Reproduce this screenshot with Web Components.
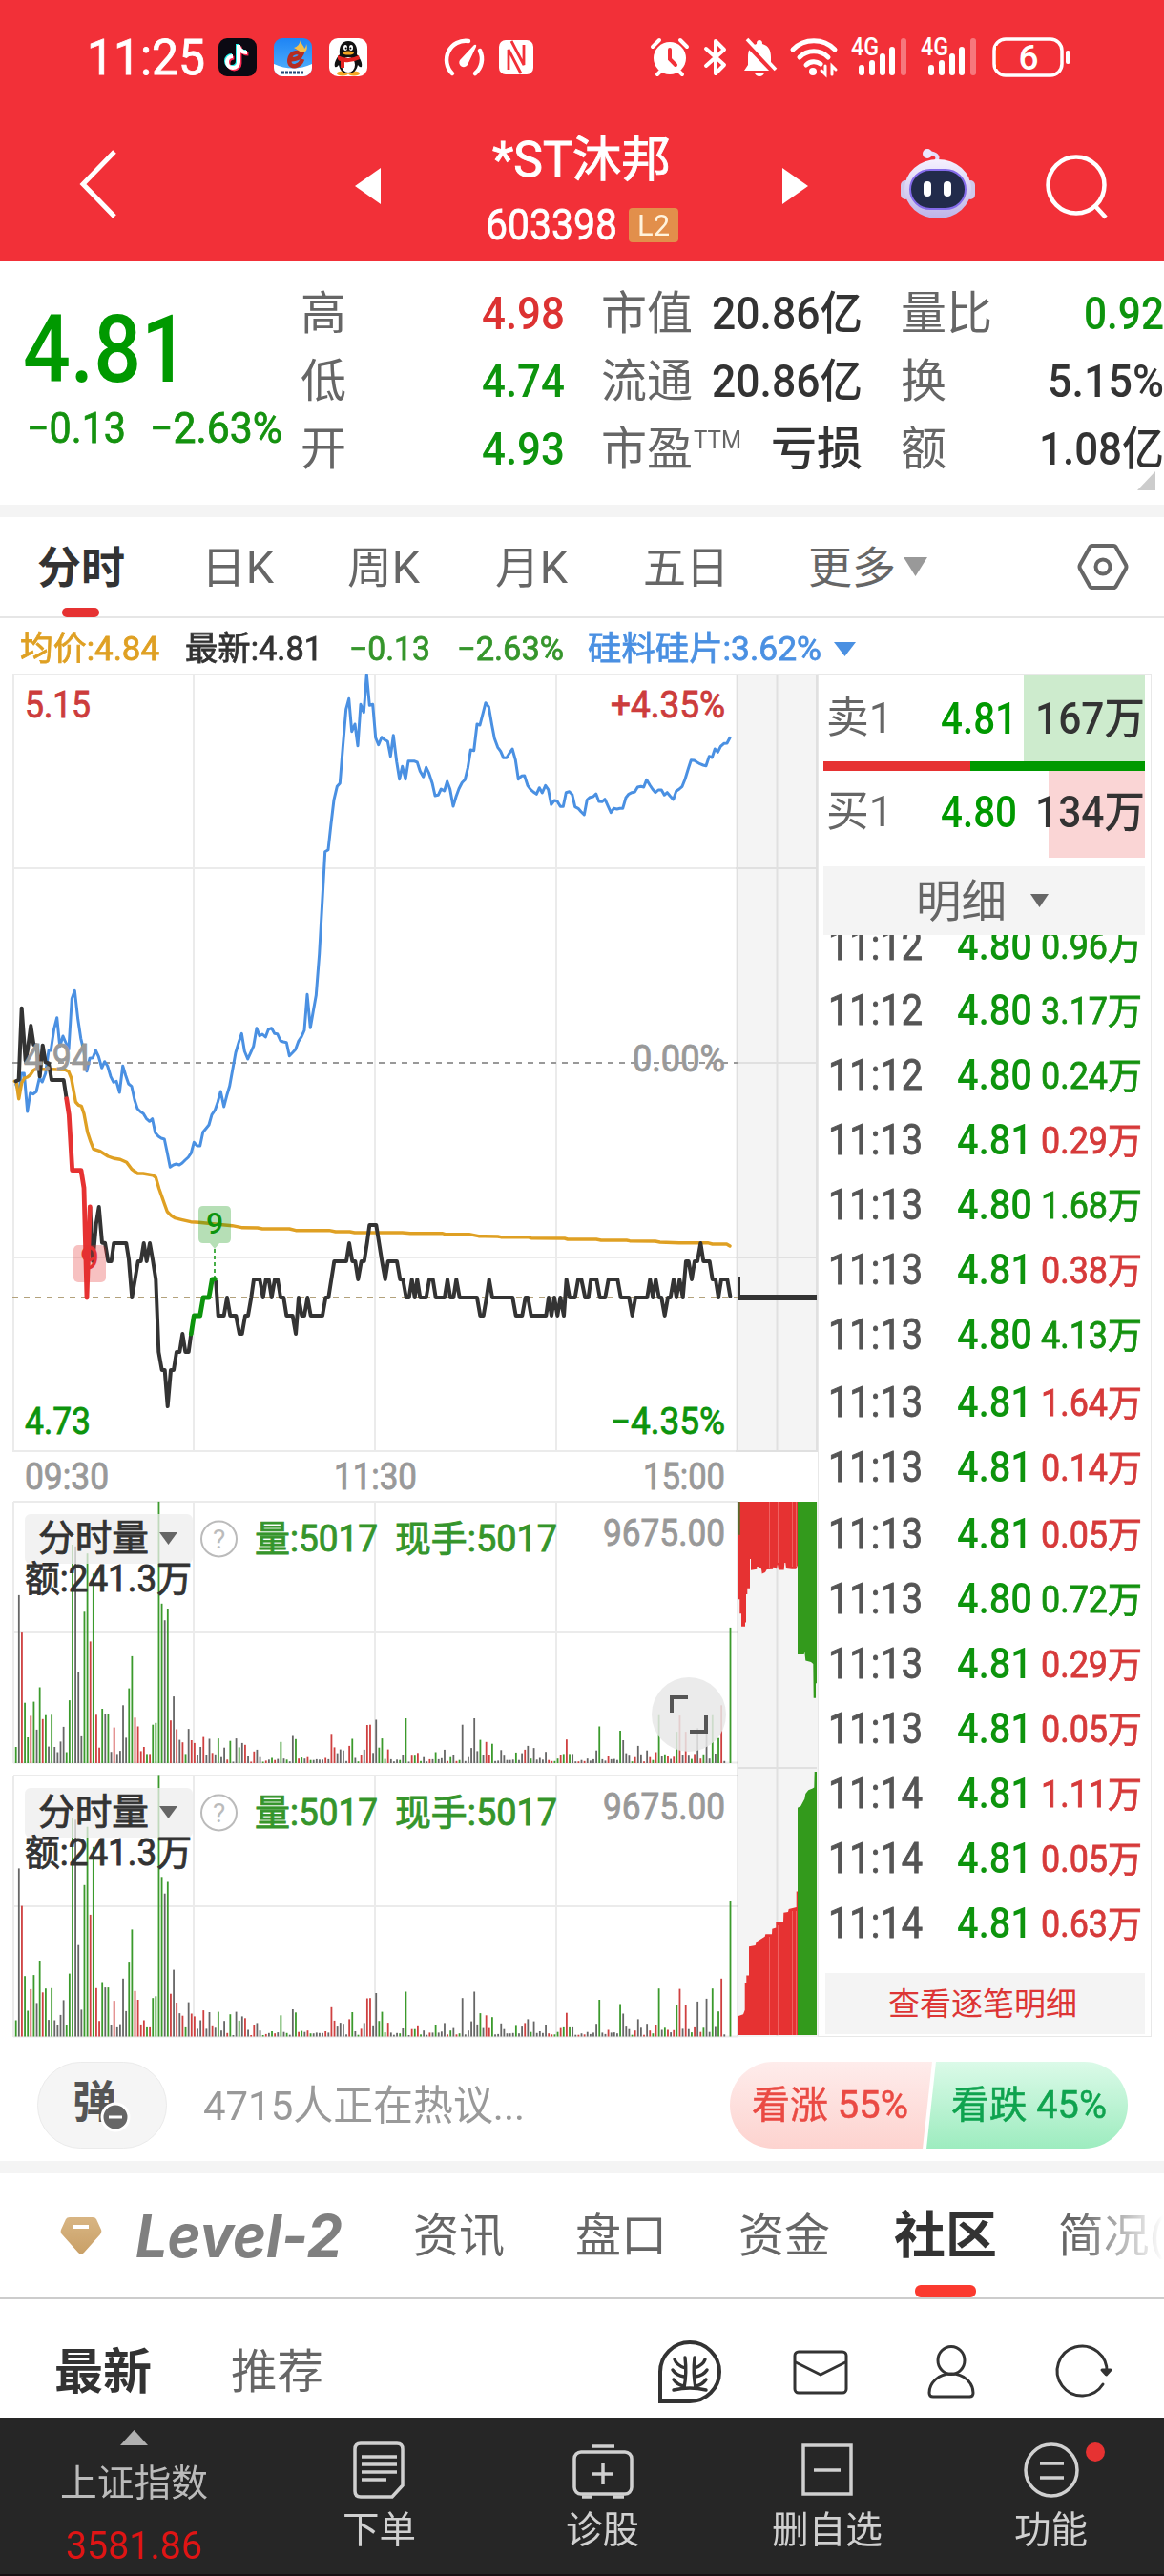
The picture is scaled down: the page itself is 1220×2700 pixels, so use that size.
<!DOCTYPE html>
<html lang="zh-CN">
<head>
<meta charset="UTF-8">
<title>*ST沐邦 603398</title>
<style>
  html, body {
    margin: 0;
    width: 1220px;
    height: 2700px;
    overflow: hidden;
    background: #fff;
    color: #333;
    font-family: Roboto, "Noto Sans CJK SC", sans-serif;
  }
</style>
</head>
<body>
<stock-app></stock-app>

<script>
const RED = '#e63232';
const GREEN = '#009900';

class StatusBar extends HTMLElement {
  constructor() {
    super();
    this.attachShadow({ mode: 'open' }).innerHTML = `
      <style>
        :host { display: flex; align-items: center; height: 120px; color: #fff; font-size: 51px; }
        svg { display: block; flex: none; overflow: visible; }
        .clock { margin-left: 91px; -webkit-text-stroke: .8px currentColor; }
      </style>
      <fit-text class="clock" w="124">11:25</fit-text>
      <svg width="40" height="40" style="margin-left:14px" viewBox="0 0 40 40">
        <rect width="40" height="40" rx="9" fill="#0b0912"/>
        <g fill="none" stroke-width="4">
          <path d="M21 7v18a6 6 0 1 1-6-6M21 8c1 5 4 7 9 7" stroke="#25f4ee" transform="translate(-1 -1)"/>
          <path d="M21 7v18a6 6 0 1 1-6-6M21 8c1 5 4 7 9 7" stroke="#fe2c55" transform="translate(1.4 1.4)"/>
          <path d="M21 7v18a6 6 0 1 1-6-6M21 8c1 5 4 7 9 7" stroke="#fff"/>
        </g>
      </svg>
      <svg width="40" height="40" style="margin-left:18px" viewBox="0 0 40 40">
        <defs><linearGradient id="sky" x2="0" y2="1"><stop stop-color="#1e84f5"/><stop offset="1" stop-color="#55b4fb"/></linearGradient></defs>
        <rect width="40" height="40" rx="9" fill="url(#sky)"/>
        <path d="M0 27q20 9 40 0v4a9 9 0 0 1-9 9H9a9 9 0 0 1-9-9z" fill="#fff"/>
        <path d="M16 22c7 1 13-2 12-5s-9-3-11 3 0 10 6 9c4-1 6-4 7-7" fill="none" stroke="#b52d22" stroke-width="4.500"/>
        <path d="M29 20c4-3 4-8 1-10l-8 1c4 1 7 4 7 9z" fill="#b52d22"/>
        <path d="M21 10c4-1 6-4 7-8 0 4 4 6 4 9 1-1 2-2 2-5 2 6 0 9-5 9z" fill="#f6c04b"/>
        <path d="M8 36h24" stroke="#234777" stroke-width="3" stroke-dasharray="3 1"/>
      </svg>
      <svg width="40" height="40" style="margin-left:18px" viewBox="0 0 40 40">
        <rect width="40" height="40" rx="9" fill="#fff"/>
        <ellipse cx="14" cy="37" rx="6" ry="2.500" fill="#f5a623"/><ellipse cx="26" cy="37" rx="6" ry="2.500" fill="#f5a623"/>
        <path d="M20 3c-7 0-10 6-9 14-4 5-6 9-5 13 2 1 3-1 4-2 1 5 4 9 10 9s9-4 10-9c1 1 2 3 4 2 1-4-1-8-5-13 1-8-2-14-9-14z" fill="#111"/>
        <ellipse cx="20" cy="28" rx="7" ry="8" fill="#fff"/>
        <ellipse cx="17" cy="10" rx="2" ry="3" fill="#fff"/><ellipse cx="23" cy="10" rx="2" ry="3" fill="#fff"/>
        <circle cx="17.600" cy="10.500" r="1"/><circle cx="22.400" cy="10.500" r="1"/>
        <ellipse cx="20" cy="15.500" rx="6" ry="2" fill="#f5a623"/>
        <path d="M9 18q11 6 22 0l1 4q-8 4-16 3v6h-4v-7q-2 0-3-2z" fill="#e42320"/>
      </svg>
      <svg width="46" height="40" style="margin-left:78px" viewBox="0 0 46 40" fill="none" stroke="#fff" stroke-width="4.500" stroke-linecap="round">
        <path d="M11 37A20 20 0 0 1 28 3M40 13A20 20 0 0 1 35 37"/>
        <path d="M19 23 34 7q3-1 2 2L27 28a4.500 4.500 0 0 1-8-5z" fill="#fff" stroke="none"/>
      </svg>
      <svg width="36" height="38" style="margin-left:14px" viewBox="0 0 36 38">
        <rect y="1" width="36" height="36" rx="7" fill="#fff"/>
        <path d="M10 32V11l13 25M26 6v21L13 2" fill="none" stroke="#f23038" stroke-width="2.800"/>
      </svg>
      <svg width="40" height="40" style="margin-left:123px" viewBox="0 0 40 40">
        <circle cx="20" cy="21" r="17" fill="#fff"/><path d="M20 12v10l6 6" fill="none" stroke="#f23038" stroke-width="4" stroke-linecap="round"/>
        <path d="M2 9 9 2M38 9l-7-7M7 38l5-5M33 38l-5-5" stroke="#fff" stroke-width="4" stroke-linecap="round"/>
      </svg>
      <svg width="24" height="38" style="margin-left:16px" viewBox="0 0 24 38" fill="none" stroke="#fff" stroke-width="4" stroke-linejoin="round" stroke-linecap="round">
        <path d="m2 10 19 17-9 9V2l9 9L2 28"/>
      </svg>
      <svg width="36" height="40" style="margin-left:16px" viewBox="0 0 36 40">
        <path d="M18 2c2 0 3 1 3 4 7 2 9 7 9 14v8l4 6H2l4-6v-8C6 13 8 8 15 6c0-3 1-4 3-4z" fill="#fff"/><path d="M13 36h10a5 4 0 0 1-10 0z" fill="#fff"/>
        <path d="m3 3 31 32" stroke="#f23038" stroke-width="7"/><path d="m5 1 30 32" stroke="#fff" stroke-width="3.600"/>
      </svg>
      <svg width="50" height="40" style="margin-left:14px" viewBox="0 0 50 40" fill="none" stroke="#fff" stroke-width="5" stroke-linecap="round">
        <path d="M3 12a31 31 0 0 1 44 0M10 20a21 21 0 0 1 30 0M17 28a12 12 0 0 1 15-1"/><circle cx="24" cy="35" r="4" fill="#fff" stroke="none"/>
        <path d="M37 29v9l-4-4M44 38v-9l4 4" stroke-width="3"/>
      </svg>
      <cell-signal style="margin-left:14px"></cell-signal>
      <cell-signal style="margin-left:13px"></cell-signal>
      <svg width="84" height="42" style="margin-left:15px" viewBox="0 0 84 42">
        <rect x="2" y="2" width="71" height="38" rx="12" fill="none" stroke="#fff" stroke-width="3.500"/>
        <path d="M6 9v24" stroke="#ff3b1f" stroke-width="4"/><rect x="77" y="14" width="4.500" height="14" rx="2" fill="#fff"/>
        <text x="38" y="34" font-size="37" font-weight="500" fill="#fff" text-anchor="middle">6</text>
      </svg>`;
  }
}

class CellSignal extends HTMLElement {
  constructor() {
    super();
    this.attachShadow({ mode: 'open' }).innerHTML = `
      <style>:host { display: block; width: 60px; height: 40px; flex: none; } svg { display: block; overflow: visible; }</style>
      <svg width="60" height="40" viewBox="0 0 60 40">
        <text x="0" y="18" font-size="25" font-weight="500" fill="#fff" textLength="29" lengthAdjust="spacingAndGlyphs">4G</text>
        <g stroke="#fff" stroke-width="6" stroke-linecap="round">
          <path d="M11 31v5M22 26v10M33 19v17M43 12v24"/><path d="M55 3v33" opacity=".35"/>
        </g>
      </svg>`;
  }
}

class TitleBar extends HTMLElement {
  constructor() {
    super();
    this.attachShadow({ mode: 'open' }).innerHTML = `
      <style>
        :host { display: flex; height: 154px; color: #fff; align-items: flex-start; }
        svg { display: block; flex: none; overflow: visible; }
        .names { margin-left: 109px; width: 203px; display: flex; flex-direction: column; align-items: center; padding-top: 22px; }
        .code { display: flex; align-items: center; margin-top: 20px; font-size: 45px; margin-left: 1px; -webkit-text-stroke: .8px currentColor; }
        .l2 { width: 52px; height: 36px; border-radius: 4px; background: #e28f4b; display: flex; justify-content: center; align-items: center; margin-left: 12px; font-size: 32px; color: #fff3dd; -webkit-text-stroke: 0; }
        .name { font-size: 51px; -webkit-text-stroke: .9px currentColor; }
      </style>
      <svg width="40" height="72" style="margin:37px 0 0 83px" viewBox="0 0 40 72" fill="none" stroke="#fff" stroke-width="5"><path d="M37 2 4 36l33 34"/></svg>
      <svg width="27" height="38" style="margin:56px 0 0 249px" viewBox="0 0 27 38"><path d="M0 19 27 0v38z" fill="#fff"/></svg>
      <div class="names">
        <fit-text class="name" w="187">*ST沐邦</fit-text>
        <div class="code"><fit-text w="138">603398</fit-text><span class="l2"><fit-text w="34">L2</fit-text></span></div>
      </div>
      <svg width="27" height="38" style="margin:56px 0 0 109px" viewBox="0 0 27 38"><path d="M27 19 0 0v38z" fill="#fff"/></svg>
      <svg width="78" height="74" style="margin:36px 0 0 97px" viewBox="0 0 78 74">
        <defs>
          <linearGradient id="shell" x2="0" y2="1"><stop stop-color="#f5f1ff"/><stop offset="1" stop-color="#bdb4e8"/></linearGradient>
        </defs>
        <path d="M37 13c4-5 0-8-8-9" fill="none" stroke="#e4defa" stroke-width="4"/><circle cx="28" cy="5" r="5" fill="#ece7ff"/>
        <rect x="0" y="33" width="10" height="20" rx="5" fill="#cfc9ec"/><rect x="68" y="33" width="10" height="20" rx="5" fill="#cfc9ec"/>
        <ellipse cx="39" cy="42" rx="35" ry="31" fill="url(#shell)"/>
        <rect x="10" y="22" width="58" height="41" rx="21" fill="#222b4b" stroke="#846bea" stroke-width="2"/>
        <rect x="24" y="34" width="8" height="16" rx="4" fill="#fff"/><rect x="45" y="34" width="8" height="16" rx="4" fill="#fff"/>
      </svg>
      <svg width="66" height="68" style="margin:42px 0 0 74px" viewBox="0 0 66 68" fill="none" stroke="#fff" stroke-width="4.500"><circle cx="32" cy="32" r="29.500"/><path d="m52 54 11 12"/></svg>`;
  }
}

class QuotePanel extends HTMLElement {
  constructor() {
    super();
    const cell = (label, labelW, value, valueW, color, sup = '') => `
      <div class="cell"><span class="label"><fit-text w="${labelW}">${label}</fit-text>${sup}</span>
      <fit-text class="value" w="${valueW}" style="color:${color}">${value}</fit-text></div>`;
    this.attachShadow({ mode: 'open' }).innerHTML = `
      <style>
        :host { display: flex; height: 255px; box-sizing: border-box; padding-top: 19px; position: relative; }
        .main { width: 317px; color: ${GREEN}; }
        .price { font-size: 98px; font-weight: 500; display: block; margin: 25px 0 0 24px; }
        .change { display: flex; font-size: 45px; margin: 10px 0 0 28px; gap: 25px; color: #14920f; -webkit-text-stroke: .8px currentColor; }
        .col { width: 274px; margin-right: 40px; }
        .cell { height: 71px; display: flex; align-items: center; justify-content: space-between; font-size: 48px; }
        .label { color: #666; display: flex; align-items: center; }
        .value { font-weight: 500; }
        .ttm { font-size: 25px; margin: -18px 0 0 1px; }
        .corner { position: absolute; right: 9px; bottom: 15px; }
      </style>
      <div class="main">
        <fit-text class="price" w="174">4.81</fit-text>
        <div class="change"><fit-text w="104">−0.13</fit-text><fit-text w="139">−2.63%</fit-text></div>
      </div>
      <div class="col" style="margin-left:-1px;width:277px">
        ${cell('高', 48, '4.98', 87, '#dc3232')}${cell('低', 48, '4.74', 87, '#0d940d')}${cell('开', 48, '4.93', 87, '#0d940d')}
      </div>
      <div class="col" style="margin-left:-2px;width:275px">
        ${cell('市值', 96, '20.86亿', 158, '#333')}${cell('流通', 96, '20.86亿', 158, '#333')}
        ${cell('市盈', 96, '亏损', 96, '#333', '<fit-text class="ttm" w="50">TTM</fit-text>')}
      </div>
      <div class="col" style="margin:0;width:276px">
        ${cell('量比', 96, '0.92', 84, '#0d940d')}${cell('换', 48, '5.15%', 122, '#333')}${cell('额', 48, '1.08亿', 131, '#333')}
      </div>
      <svg class="corner" width="19" height="20"><path d="M19 0v20H0z" fill="#ccc"/></svg>`;
  }
}

class PeriodTabs extends HTMLElement {
  constructor() {
    super();
    this.attachShadow({ mode: 'open' }).innerHTML = `
      <style>
        :host { display: flex; align-items: center; height: 104px; border-top: 13px solid #f4f4f4; border-bottom: 2px solid #e6e6e6; color: #666; font-size: 46px; }
        fit-text { margin-top: 1px; }
        .active { display: flex; position: relative; color: #333; font-weight: 700; margin-left: 39px; }
        .active i { position: absolute; left: 26px; bottom: -29px; width: 39px; height: 10px; border-radius: 5px; background: ${RED}; }
        svg { display: block; flex: none; }
      </style>
      <span class="active"><fit-text w="92">分时</fit-text><i></i></span>
      <fit-text w="76" style="margin-left:80px">日K</fit-text>
      <fit-text w="76" style="margin-left:77px">周K</fit-text>
      <fit-text w="76" style="margin-left:79px">月K</fit-text>
      <fit-text w="90" style="margin-left:79px">五日</fit-text>
      <fit-text w="92" style="margin-left:83px">更多</fit-text>
      <svg width="25" height="20" style="margin-left:8px"><path d="M0 0h25L12.500 20z" fill="#999"/></svg>
      <svg width="54" height="50" style="margin-left:157px" viewBox="0 0 54 50" fill="none" stroke="#666" stroke-width="4"><path d="M16 3h22q2 0 3 2l10 18q1 2 0 4L41 45q-1 2-3 2H16q-2 0-3-2L3 27q-1-2 0-4L13 5q1-2 3-2z"/><circle cx="27" cy="25" r="7.500"/></svg>`;
  }
}

class ChartLegend extends HTMLElement {
  constructor() {
    super();
    this.attachShadow({ mode: 'open' }).innerHTML = `
      <style>
        :host { display: flex; align-items: center; height: 58px; box-sizing: border-box; padding: 6px 0 0 21px; font-size: 35px; -webkit-text-stroke: .8px currentColor; }
        svg { margin-left: 13px; }
      </style>
      <fit-text w="146" style="color:#dfa023">均价:4.84</fit-text>
      <fit-text w="144" style="margin-left:27px">最新:4.81</fit-text>
      <fit-text w="85" style="margin-left:28px;color:#35952b">−0.13</fit-text>
      <fit-text w="112" style="margin-left:28px;color:#35952b">−2.63%</fit-text>
      <fit-text w="245" style="margin-left:25px;color:#4a90e2">硅料硅片:3.62%</fit-text>
      <svg width="23" height="15"><path d="M0 0h23L11.500 15z" fill="#4a90e2"/></svg>`;
  }
}

// Series are kept in thirds of a pixel, in blocks with their own origin: [x, y, points]
function toPoints(blocks) {
  return blocks.map(([ox, oy, pts]) => pts.trim().split(/\s+/).map(p => {
    const [x, y] = p.split(',').map(Number);
    return (ox + x / 3).toFixed(1) + ',' + (oy + y / 3).toFixed(1);
  }).join(' ')).join(' ');
}

const SECTOR = [
  [0, 1080, '50,170 59,192 68,135 76,135 86,255 95,197 104,200 114,193 124,150 133,162 143,135 153,63 160,63 170,-5 179,-40 188,50 198,18 216,60 226,-100 235,-125 245,-35 254,25 263,63 273,128 282,88 292,86 301,63 310,82 320,118 329,98 338,112 348,145 357,163 366,160 376,195 386,112 395,142 404,168 414,176 423,218 432,246 441,255 451,262 460,277 470,286 479,278 488,322 498,333 507,339 517,342 526,385 535,430 545,423 554,420 564,423 573,417 582,408 592,399 601,386 610,352 620,363 629,363 638,320 648,308 657,297 666,265 676,251 685,225 694,192 704,240 713,205 722,175 732,120 741,70 750,40 760,10 769,65 779,90 788,70 797,50'],
  [0, 700, '807,1133 816,1157 825,1152 835,1161 844,1137 854,1133 863,1150 872,1151 882,1173 891,1176 901,1178 910,1220 920,1210 929,1200 938,1175 948,1160 957,1140 966,1027 976,1132 985,1080 994,1030 1004,900 1013,740 1022,578 1032,572 1041,490 1050,415 1060,373 1069,363 1078,250 1088,130 1097,97 1106,200 1116,177 1125,245 1134,115 1144,140 1153,20 1162,118 1172,115 1181,220 1190,242 1200,218 1209,226 1219,231 1228,278 1237,212 1247,295 1256,350 1265,310 1275,350 1284,293'],
  [430, 700, '0,293 12,293 22,297 31,325 41,343 50,313 59,332 69,362 78,402 88,400 97,381 107,387 116,357 125,382 135,435 144,405 153,380 163,361 172,352 181,315 190,258 200,260 210,177 219,180 228,145 237,110 247,123 256,175 265,222 275,250 284,262 293,283 303,283 312,268 321,255 331,290 340,350 350,340 359,339 369,370 378,382 387,390 397,397 406,377 415,393 425,370 434,383 443,430 453,417 462,419 472,436 481,436 490,392 500,389 509,398 518,437 528,442 537,452 547,462 556,415 565,407 575,405 584,396 593,420 603,421 612,413 621,433 631,455 640,442 650,444 659,442 668,442 678,408 687,397 697,392 706,390 715,375 725,373 734,375 743,352 753,368 762,382 771,392 780,384 790,384 799,400 808,392 818,404 827,414 836,388 846,381 855,373 864,350 874,318 883,290 893,291 902,297 911,302 921,306 930,308 940,278 949,282 958,255 967,265 976,247 986,238 996,237 1005,220']
];
const AVERAGE = [
  [0, 1080, '46,160 52,165 59,215 68,165 77,150 86,147 95,140 105,125 115,120 130,122 160,122 205,124 216,130 224,150 238,225 247,235 256,238 264,262 275,320 285,350 294,373 315,380 340,396 360,403 378,406 398,415 415,437 433,450 450,450 480,455 490,462 500,497 515,540 526,570 538,582 550,590 570,595 600,602 625,604 730,614 760,620 810,621 825,624 910,624 930,629 1035,629 1055,633 1100,633 1115,636 1265,636'],
  [430, 1080, '0,638 100,638 110,641 185,641 215,647 275,648 285,650 370,650 380,653 485,654 495,657 585,657 600,660 680,660 690,662 770,663 785,666 845,668 935,668 950,672 995,672 1005,678']
];
const PRICE_OPEN = [[0, 1080, '50,160 59,155 68,-70 80,95 87,60 97,-15 106,45 116,47 125,145 134,47 143,100 153,103 162,156 200,156 209,215']];
const PRICE_DOWN9 = [[0, 1080, '209,215 217,265 227,440 255,440 264,495 273,840 283,555']];
const PRICE_MID = [[0, 1080, '283,555 292,725 302,610 311,555 321,668 330,668 340,726 350,726 358,669 397,669 405,720 415,840 425,780 434,726 443,726 452,669 461,726 471,669 480,720 490,783 499,1011 509,1068 518,1068 527,1182 537,1068 546,1068 555,1011 565,1011 574,954 583,1011 593,1011 601,954']];
const PRICE_UP9 = [[0, 1080, '601,954 610,897 629,897 639,840 657,840 667,783 676,782']];
const PRICE_REST = [
  [0, 1080, '679,790 686,897 704,897 714,840 724,897 742,897 753,954 761,954 771,897 780,897 790,840 798,783 817,783 827,840 836,783 845,783 854,840 864,783 873,783 882,840 892,840 901,897 920,897 930,954 939,840 949,897 957,897 967,840 977,897 1014,897 1024,840 1033,840 1042,783 1051,726 1089,726 1098,669 1108,726 1117,726 1126,783 1136,726 1145,726 1154,669 1162,612 1183,612 1192,669 1201,726 1211,783 1220,726 1248,726 1258,783 1267,783 1277,840 1286,840'],
  [430, 1080, '5,783 14,840 22,783 31,840 50,840 60,783 71,783 80,840 108,840 117,783 126,840 136,840 145,783 155,840 210,840 220,897 230,897 240,840 248,783 258,840 322,840 332,897 352,897 362,840 370,840 380,897 427,897 435,840 444,897 453,840 463,897 472,840 483,897 491,783 501,840 518,840 528,783 538,783 550,840 560,840 568,783 586,783 596,840 613,840 623,783 652,783 662,840 688,840 698,897 708,840 745,840 754,783 763,840 772,783 782,840 790,840 800,897 810,840 818,840 828,783 837,840 847,783 857,840 867,726 875,726 885,783 894,726 903,726 913,669 922,726 941,726 950,783 960,783 969,840 978,783 997,783 1006,836']
];

// One entry per minute: colour letter + height
const VOLUME = `g46 k476 r370 g171 g73 r134 g174 k95 g215 r125 g136 k47 g137 k46 k31 k61 k103 g31 g178 g619 k614 k259 k76 g429
g594 r345 g537 r137 r44 g154 k139 g139 k32 r101 k26 k35 k164 k72 g212 g303 r129 r104 r34 r46 g26 r26 g109 g114 g741 g452 k405 g438
r121 k189 r96 k66 r59 g26 k97 r65 r57 k22 k46 r74 k22 k69 r29 k25 g70 k17 k44 r10 g63 k4 k70 g45 k57 r52 k19 r4 r33 k38 k17 g4 r7 k10
g15 r9 k12 g60 k13 g10 k5 k77 g68 r13 g16 k13 r17 g9 k9 k11 k10 k10 r15 k11 r83 r45 k28 k39 k36 k6 r49 g69 k15 g5 r22 k38 r108 r109
k29 k123 g44 g70 g12 r39 k11 k5 k10 g9 k23 g127 k4 r21 g21 r29 g6 k17 k5 r11 k11 g31 k11 k14 k38 r6 g17 k24 r6 g9 k109 k6 k17 k43
k127 k34 g66 k24 r60 r24 g55 k6 k7 k37 k21 k9 k9 k10 g30 k9 k28 r38 k49 g13 k43 k10 k15 k10 k32 r9 r6 g6 g13 r24 g26 r67 g26 k26 k5
r5 k9 r6 k13 k7 k11 k36 g104 k11 k7 r19 k11 k12 k9 g92 k65 k28 k21 g5 r17 k49 k25 r5 k36 r17 g9 r31 g136 k19 g25 r19 k12 r18 g89 r135
k22 r89 k21 g12 r26 k99 r13 g25 k107 k13 g136 k27 g71 r164 k6 k0 g384`.trim().split(/\s+/);

class MinuteChart extends HTMLElement {
  constructor() {
    super();
    this.attachShadow({ mode: 'open' }).innerHTML = `
      <style>
        :host { display: block; width: 857px; height: 1431px; flex: none; }
        svg { display: block; }
        .grid path { stroke: #000; stroke-opacity: .08; stroke-width: 2; fill: none; }
        polyline { fill: none; stroke-linejoin: round; stroke-linecap: round; }
        text { stroke-width: .9px; }
      </style>
      <svg width="857" height="1431" viewBox="0 706 857 1431">
        <rect x="771" y="707" width="86" height="815" fill="#f4f4f4"/>
        <rect x="773" y="1574" width="84" height="561" fill="#f4f4f4"/>
        <g class="grid">
          <path d="M14 707H856V1521H14ZM203 707V1521M393 707V1521M583 707V1521M773 707V1521M814.500 707V1521M14 910H856M773 1114H856M14 1318H856"/>
          <path d="M773 1574V2134M814.500 1574V2134M773 1853H856"/>
          ${this.grid(1574)}${this.grid(1861)}
        </g>
        <path d="M13 1114H773" stroke="#999" stroke-width="2" stroke-dasharray="6 6"/>
        <path d="M13 1360H773" stroke="#b3a27c" stroke-width="2" stroke-dasharray="6 6"/>
        ${this.label(28, 752, 65, '5.15', '#cc3c3c')}
        ${this.label(642, 752, 116, '+4.35%', '#cc3c3c')}
        ${this.label(665, 1123, 93, '0.00%', '#999')}
        ${this.label(28, 1503, 65, '4.73', '#0d940d')}
        ${this.label(642, 1503, 116, '−4.35%', '#0d940d')}
        ${this.label(28, 1561, 84, '09:30', '#999')}
        ${this.label(352, 1561, 83, '11:30', '#999')}
        ${this.label(676, 1561, 82, '15:00', '#999')}
        ${this.line(SECTOR, '#4a90e2', 3)}
        ${this.line(AVERAGE, '#dfa023', 3.4)}
        ${this.line(PRICE_OPEN, '#333', 4)}
        ${this.line(PRICE_MID, '#333', 4)}
        ${this.line(PRICE_REST, '#333', 4)}
        ${this.line(PRICE_DOWN9, RED, 4.8)}
        ${this.line(PRICE_UP9, '#0d940d', 4.8)}
        ${this.label(27, 1122, 66, '4.94', '#999')}
        <path d="M773 1338h3v19h80v6h-83z" fill="#333"/>
        <text x="94" y="1331" font-size="35" font-weight="500" fill="${RED}" text-anchor="middle">9</text>
        <rect x="77" y="1305" width="34" height="39" rx="5" fill="${RED}" opacity=".3"/>
        <path d="M225 1309v30" stroke="#0d940d" stroke-width="1.500" stroke-dasharray="4 3"/>
        <path d="M213 1264h24q5 0 5 5v29q0 5-5 5h-7l-5 6-5-6h-7q-5 0-5-5v-29q0-5 5-5z" fill="#0d940d" opacity=".3"/>
        <text x="225" y="1293" font-size="32" font-weight="500" fill="#0d940d" text-anchor="middle">9</text>
        ${this.volume(1574, 1848)}
        ${this.volume(1861, 2134.5)}
        ${this.auction()}
        <circle cx="722" cy="1797" r="39" fill="#e8e8e8" opacity=".85"/>
        <path d="M704 1795v-16h17M740 1798v17h-17" fill="none" stroke="#555" stroke-width="4"/>
      </svg>`;
  }

  grid(top) {
    return `<path d="M14 ${top}H773M14 ${top + 137}H773M14 ${top + 273.5}H773M14 ${top}v274M203 ${top}v274M393 ${top}v274M583 ${top}v274"/>`;
  }

  label(x, y, w, text, fill, size = 38) {
    return `<text x="${x - 2}" y="${y}" font-size="${size}" fill="${fill}" stroke="${fill}" textLength="${w + 4}" lengthAdjust="spacingAndGlyphs">${text}</text>`;
  }

  line(blocks, stroke, width) {
    return `<polyline points="${toPoints(blocks)}" stroke="${stroke}" stroke-width="${width}"/>`;
  }

  volume(top, bottom) {
    const fills = { g: '#3b9a2c', k: '#666', r: '#cf4040' };
    const bars = VOLUME.map((v, i) => {
      const h = v.slice(1) / 2.703;
      return `<rect x="${(15.8 + i * 3.12).toFixed(2)}" y="${(bottom - h).toFixed(1)}" width="1.8" height="${h.toFixed(1)}" fill="${fills[v[0]]}"/>`;
    }).join('');
    return `${bars}
      <rect x="26" y="${top + 13}" width="176" height="52" rx="6" fill="#eee" opacity=".75"/>
      ${this.label(42, top + 51, 112, '分时量', '#333')}
      <path d="M167 ${top + 32}h19l-9.500 13z" fill="#666"/>
      <circle cx="229.500" cy="${top + 39}" r="18.500" fill="none" stroke="#bbb" stroke-width="2"/>
      <text x="229.500" y="${top + 49}" font-size="28" fill="#bbb" text-anchor="middle">?</text>
      ${this.label(269, top + 52, 125, '量:5017', '#35952b')}
      ${this.label(416, top + 52, 166, '现手:5017', '#35952b')}
      ${this.label(634, top + 46, 124, '9675.00', '#999')}
      ${this.label(28, top + 94, 171, '额:241.3万', '#333')}`;
  }

  // Closing auction: matched volume below, remainder hanging from the top
  auction() {
    const poly = (pts, fill) => `<polygon fill="${fill}" points="${pts.trim().split(/\s+/).map(p => {
      const [x, y] = p.split(',').map(Number);
      return (430 + x / 3).toFixed(1) + ',' + (1560 + y / 2.703).toFixed(1);
    }).join(' ')}"/>`;
    return poly('1032,38 1032,314 1036,314 1036,355 1041,355 1041,391 1053,391 1053,380 1056,380 1056,300 1060,300 1060,283 1068,283 1068,200 1071,200 1071,232 1090,229 1090,222 1093,222 1104,228 1106,242 1116,238 1121,230 1140,229 1142,223 1152,228 1155,215 1158,231 1175,231 1177,211 1180,211 1182,227 1200,229 1213,229 1218,218 1218,38', '#e63232')
      + poly('1029,38 1029,132 1037,132 1037,38', '#5a6a2c')
      + poly('1218,38 1218,470 1232,470 1238,470 1240,463 1243,488 1260,492 1267,497 1268,594 1275,594 1275,552 1278,552 1278,38', '#339a1c')
      + poly('1032,1549 1032,1495 1047,1490 1052,1478 1052,1400 1057,1400 1057,1380 1065,1380 1065,1298 1085,1295 1088,1285 1115,1270 1117,1263 1137,1263 1138,1248 1150,1245 1150,1230 1173,1228 1174,1202 1188,1200 1190,1192 1214,1187 1214,1142 1218,1142 1218,1549', '#e63232')
      + poly('1218,1549 1218,905 1228,900 1240,880 1243,865 1252,855 1265,850 1270,847 1271,803 1278,803 1278,1549', '#339a1c')
      + '<path d="M806.500 1574v70M815.500 1574v64M830.500 1574v68M834.500 1574v68M806.500 2030v103M815.500 2018v115M830.500 2003v130M834.500 2003v130" stroke="#f37777" stroke-width="1" opacity=".7"/>';
  }
}

class OrderPanel extends HTMLElement {
  constructor() {
    super();
    const ticks = [
      ['11:12', '4.80', '0.96', 'g'], ['11:12', '4.80', '3.17', 'g'], ['11:12', '4.80', '0.24', 'g'], ['11:13', '4.81', '0.29', 'r'],
      ['11:13', '4.80', '1.68', 'g'], ['11:13', '4.81', '0.38', 'r'], ['11:13', '4.80', '4.13', 'g'], ['11:13', '4.81', '1.64', 'r'],
      ['11:13', '4.81', '0.14', 'r'], ['11:13', '4.81', '0.05', 'r'], ['11:13', '4.80', '0.72', 'g'], ['11:13', '4.81', '0.29', 'r'],
      ['11:13', '4.81', '0.05', 'r'], ['11:14', '4.81', '1.11', 'r'], ['11:14', '4.81', '0.05', 'r'], ['11:14', '4.81', '0.63', 'r']
    ];
    this.attachShadow({ mode: 'open' }).innerHTML = `
      <style>
        :host { display: flex; flex-direction: column; width: 350px; height: 1429px; box-sizing: border-box; border: 1px solid #e8e8e8; padding: 0 6px 0 5px; }
        .level { display: flex; align-items: center; justify-content: space-between; height: 91px; font-size: 46px; box-sizing: border-box; padding: 0 0 0 3px; }
        .level .side { color: #666; font-size: 45px; }
        .level .price { color: ${GREEN}; font-weight: 500; margin-left: 31px; }
        .level .qty { font-weight: 500; }
        .ask { background: linear-gradient(90deg, transparent 210px, #cdebcd 210px); }
        .bid { background: linear-gradient(90deg, transparent 236px, #fad5d5 236px); padding-bottom: 6px; }
        .ratio { height: 10px; flex: none; background: linear-gradient(90deg, ${RED} 154px, ${GREEN} 154px); }
        .detail { display: flex; align-items: center; justify-content: center; height: 72px; box-sizing: border-box; margin-top: 9px; background: #f4f4f4; color: #666; font-size: 47px; gap: 25px; padding-right: 4px; }
        .list { height: 1088px; overflow: hidden; }
        .tick { display: flex; align-items: center; height: 68px; box-sizing: border-box; padding-left: 5px; font-size: 45px; }
        .tick:first-child { margin-top: -24px; }
        .tick:nth-child(8) { margin-top: 3px; }
        .tick:nth-child(10) { margin-top: 2px; }
        .time { color: #555; -webkit-text-stroke: .9px currentColor; }
        .tp { color: #0d940d; font-weight: 500; margin-left: 36px; }
        .tv { font-size: 38px; margin: 4px 0 0 9px; -webkit-text-stroke: .8px currentColor; }
        .g { color: #14920f; } .r { color: #d63a3a; }
        .more { display: flex; align-items: center; justify-content: center; height: 64px; background: #f4f4f4; color: #dd3535; font-size: 33px; margin-left: 2px; padding-right: 5px; }
      </style>
      <div class="level ask"><fit-text class="side" w="70">卖1</fit-text><fit-text class="price" w="80">4.81</fit-text><fit-text class="qty" w="115">167万</fit-text></div>
      <div class="ratio"></div>
      <div class="level bid"><fit-text class="side" w="70">买1</fit-text><fit-text class="price" w="80">4.80</fit-text><fit-text class="qty" w="115">134万</fit-text></div>
      <div class="detail"><fit-text w="95">明细</fit-text><svg width="19" height="14"><path d="M0 0h19L9.500 14z" fill="#666"/></svg></div>
      <div class="list">
        ${ticks.map(([t, p, v, c]) => `<div class="tick"><fit-text class="time" w="99">${t}</fit-text><fit-text class="tp" w="79">${p}</fit-text><fit-text class="tv ${c}" w="106">${v}万</fit-text></div>`).join('')}
      </div>
      <div class="more"><fit-text w="198">查看逐笔明细</fit-text></div>`;
  }
}

class ChatStrip extends HTMLElement {
  constructor() {
    super();
    this.attachShadow({ mode: 'open' }).innerHTML = `
      <style>
        :host { display: flex; align-items: center; height: 91px; padding: 24px 38px 13px 39px; font-size: 43px; border-bottom: 13px solid #f4f4f4; }
        .danmu { position: relative; display: flex; align-items: center; justify-content: center; width: 136px; height: 91px; box-sizing: border-box; border: 1px solid #ebebeb; border-radius: 46px; background: #f5f5f5; font-weight: 700; color: #555; font-size: 46px; padding: 0 16px 7px 0; }
        .danmu svg { position: absolute; left: 65px; top: 41px; }
        .hot { margin: 2px 0 0 38px; color: #999; }
        .poll { margin-left: auto; display: flex; font-size: 40px; -webkit-text-stroke: .5px currentColor; }
        .up, .down { height: 91px; display: flex; align-items: center; box-sizing: border-box; }
        .up { width: 212px; padding-left: 23px; border-radius: 46px 0 0 46px; color: #ea4a43; background: linear-gradient(#feeceb, #fdd3cf); clip-path: polygon(0 0, 100% 0, calc(100% - 10px) 100%, 0 100%); }
        .down { width: 211px; padding-left: 26px; margin-left: -6px; border-radius: 0 46px 46px 0; color: #0fa34f; background: linear-gradient(#dbfae8, #9decbf); clip-path: polygon(10px 0, 100% 0, 100% 100%, 0 100%); }
      </style>
      <div class="danmu"><fit-text w="46">弹</fit-text>
        <svg width="32" height="32"><circle cx="16" cy="16" r="14" fill="#666" stroke="#fff" stroke-width="3"/><path d="M9 16h14" stroke="#fff" stroke-width="3"/></svg>
      </div>
      <fit-text class="hot" w="337">4715人正在热议...</fit-text>
      <div class="poll">
        <div class="up"><fit-text w="164">看涨 55%</fit-text></div>
        <div class="down"><fit-text w="163">看跌 45%</fit-text></div>
      </div>`;
  }
}

class SectionTabs extends HTMLElement {
  constructor() {
    super();
    this.attachShadow({ mode: 'open' }).innerHTML = `
      <style>
        :host { display: flex; align-items: center; height: 130px; border-bottom: 2px solid #ccc; color: #666; font-size: 48px; overflow: hidden; }
        svg, fit-text, .active { flex: none; }
        fit-text { margin-top: 2px; }
        .level2 { font-family: Inter, sans-serif; font-weight: 700; font-style: italic; font-size: 62px; color: #808080; margin-left: 35px; }
        .active { display: flex; position: relative; margin-left: 67px; color: #333; font-size: 53px; font-weight: 700; }
        .active i { position: absolute; left: 22px; bottom: -37px; width: 64px; height: 13px; border-radius: 6px; background: #fb3a2f; }
        .fade { margin-left: 64px; -webkit-mask-image: linear-gradient(90deg, #000 20px, transparent 110px); mask-image: linear-gradient(90deg, #000 20px, transparent 110px); }
      </style>
      <svg width="44" height="39" style="margin-left:63px" viewBox="0 0 44 39">
        <defs><linearGradient id="gold" x2="0" y2="1"><stop stop-color="#d8b583"/><stop offset="1" stop-color="#c9a067"/></linearGradient></defs>
        <path d="M10 0h24q3 0 4 2l5 11q1 2-1 5L25 37q-3 3-6 0L2 18q-2-2-1-5L6 2q1-2 4-2z" fill="url(#gold)"/><path d="M14 10h16" stroke="#fff" stroke-width="4"/>
      </svg>
      <fit-text class="level2" w="217">Level-2</fit-text>
      <fit-text w="96" style="margin-left:74px">资讯</fit-text>
      <fit-text w="96" style="margin-left:74px">盘口</fit-text>
      <fit-text w="96" style="margin-left:75px">资金</fit-text>
      <span class="active"><fit-text w="108">社区</fit-text><i></i></span>
      <fit-text class="fade" w="112">简况(</fit-text>`;
  }
}

class FeedTabs extends HTMLElement {
  constructor() {
    super();
    this.attachShadow({ mode: 'open' }).innerHTML = `
      <style>
        :host { display: flex; align-items: center; height: 124px; box-sizing: border-box; padding: 28px 0 0 57px; font-size: 49px; color: #666; }
        .active { color: #333; font-weight: 700; font-size: 51px; }
        svg { flex: none; fill: none; stroke: #333; stroke-width: 3; stroke-linejoin: round; stroke-linecap: round; overflow: visible; }
      </style>
      <fit-text class="active" w="102">最新</fit-text>
      <fit-text w="97" style="margin-left:83px">推荐</fit-text>
      <svg width="66" height="66" style="margin-left:351px" viewBox="0 0 66 66">
        <path d="M2 64V33A31 31 0 1 1 33 64z" stroke-width="4" stroke-linejoin="miter"/>
        <path d="M28 18q2 16-1 32M38 18q-2 16 1 32M16 52q17-4 34 0M17 20q2 6 11 9M15 31q4 6 12 7M16 41q4 6 11 7M49 20q-2 6-11 9M51 31q-4 6-12 7M50 41q-4 6-11 7" stroke-width="3.400"/>
      </svg>
      <svg width="58" height="46" style="margin-left:75px" viewBox="0 0 58 46"><rect x="2" y="2" width="54" height="43" rx="4"/><path d="m3 13 26 13 26-13"/></svg>
      <svg width="50" height="56" style="margin-left:83px" viewBox="0 0 50 56"><ellipse cx="25" cy="16" rx="14" ry="14.500"/><path d="M25 30c14 0 23 10 23 20q0 4-4 4H6q-4 0-4-4c0-10 9-20 23-20z"/></svg>
      <svg width="58" height="56" style="margin-left:85px" viewBox="0 0 58 56"><path d="M53 29A26 26 0 1 0 49 41"/><path d="m48 26h9l-4.500 5z" fill="#333"/></svg>`;
  }
}

class BottomBar extends HTMLElement {
  constructor() {
    super();
    this.attachShadow({ mode: 'open' }).innerHTML = `
      <style>
        :host { display: flex; height: 166px; background: #262626; color: #d0d0d0; font-size: 39px; box-sizing: border-box; border-bottom: 2px solid #171013; }
        .item { position: relative; width: 235px; display: flex; flex-direction: column; align-items: center; margin-left: -1px; margin-right: 1px; }
        .item svg { margin-top: 23px; height: 64px; fill: none; stroke: #d0d0d0; stroke-width: 3.500; }
        .item fit-text { margin-top: 12px; }
        .index { width: 281px; display: flex; flex-direction: column; align-items: center; color: #bbb; }
        .index svg { margin-top: 13px; }
        .index .name { margin-top: 21px; }
        .index .num { margin-top: 25px; color: #df1515; font-size: 41px; }
        .dot { position: absolute; left: 154px; top: 26px; width: 20px; height: 20px; border-radius: 50%; background: ${RED}; }
      </style>
      <div class="index">
        <svg width="29" height="16"><path d="M14.500 0 29 16H0z" fill="#b0b0b0"/></svg>
        <fit-text class="name" w="155">上证指数</fit-text>
        <fit-text class="num" w="143">3581.86</fit-text>
      </div>
      <div class="item">
        <svg width="54" viewBox="0 0 54 64"><path d="M8 4h38q6 0 6 6v38L41 60H8q-6 0-6-6V10q0-6 6-6zM9 18h37M9 26h37M9 34h37M9 42h26"/></svg>
        <fit-text w="77">下单</fit-text>
      </div>
      <div class="item">
        <svg width="64" viewBox="0 0 64 64"><rect x="2" y="13" width="60" height="44" rx="7"/><path d="M20 7h24M32 25v22M21 36h22M10 60h11M43 60h11"/></svg>
        <fit-text w="77">诊股</fit-text>
      </div>
      <div class="item">
        <svg width="54" viewBox="0 0 54 64"><rect x="2" y="6" width="50" height="51"/><path d="M13 32h28"/></svg>
        <fit-text w="116">删自选</fit-text>
      </div>
      <div class="item">
        <svg width="58" viewBox="0 0 58 64"><circle cx="29" cy="32" r="27"/><path d="M17 25h25M17 40h25"/></svg>
        <i class="dot"></i>
        <fit-text w="77">功能</fit-text>
      </div>`;
  }
}

class StockApp extends HTMLElement {
  constructor() {
    super();
    this.attachShadow({ mode: 'open' }).innerHTML = `
      <style>
        :host { display: flex; flex-direction: column; width: 1220px; height: 2700px; overflow: hidden; }
        header { background: #f23038; flex: none; }
        .chart { display: flex; height: 1431px; flex: none; }
        bottom-bar { margin-top: auto; }
      </style>
      <header><status-bar></status-bar><title-bar></title-bar></header>
      <quote-panel></quote-panel>
      <period-tabs></period-tabs>
      <chart-legend></chart-legend>
      <div class="chart"><minute-chart></minute-chart><order-panel></order-panel></div>
      <chat-strip></chat-strip>
      <section-tabs></section-tabs>
      <feed-tabs></feed-tabs>
      <bottom-bar></bottom-bar>`;
  }
}

// Squeezes or stretches one line of text to the width in its "w" attribute
class FitText extends HTMLElement {
  constructor() {
    super();
    this.attachShadow({ mode: 'open' }).innerHTML = `
      <style>
        :host { display: inline-block; flex: none; line-height: 1; white-space: nowrap; vertical-align: top; }
        span { display: inline-block; transform-origin: 0 50%; vertical-align: top; }
      </style>
      <span><slot></slot></span>`;
  }

  connectedCallback() {
    const span = this.shadowRoot.querySelector('span');
    const width = Number(this.getAttribute('w'));
    this.style.width = width + 'px';
    span.style.transform = `scaleX(${width / span.getBoundingClientRect().width})`;
  }
}

customElements.define('stock-app', StockApp);
customElements.define('status-bar', StatusBar);
customElements.define('cell-signal', CellSignal);
customElements.define('title-bar', TitleBar);
customElements.define('quote-panel', QuotePanel);
customElements.define('period-tabs', PeriodTabs);
customElements.define('chart-legend', ChartLegend);
customElements.define('minute-chart', MinuteChart);
customElements.define('order-panel', OrderPanel);
customElements.define('chat-strip', ChatStrip);
customElements.define('section-tabs', SectionTabs);
customElements.define('feed-tabs', FeedTabs);
customElements.define('bottom-bar', BottomBar);
customElements.define('fit-text', FitText);
</script>
</body>
</html>
